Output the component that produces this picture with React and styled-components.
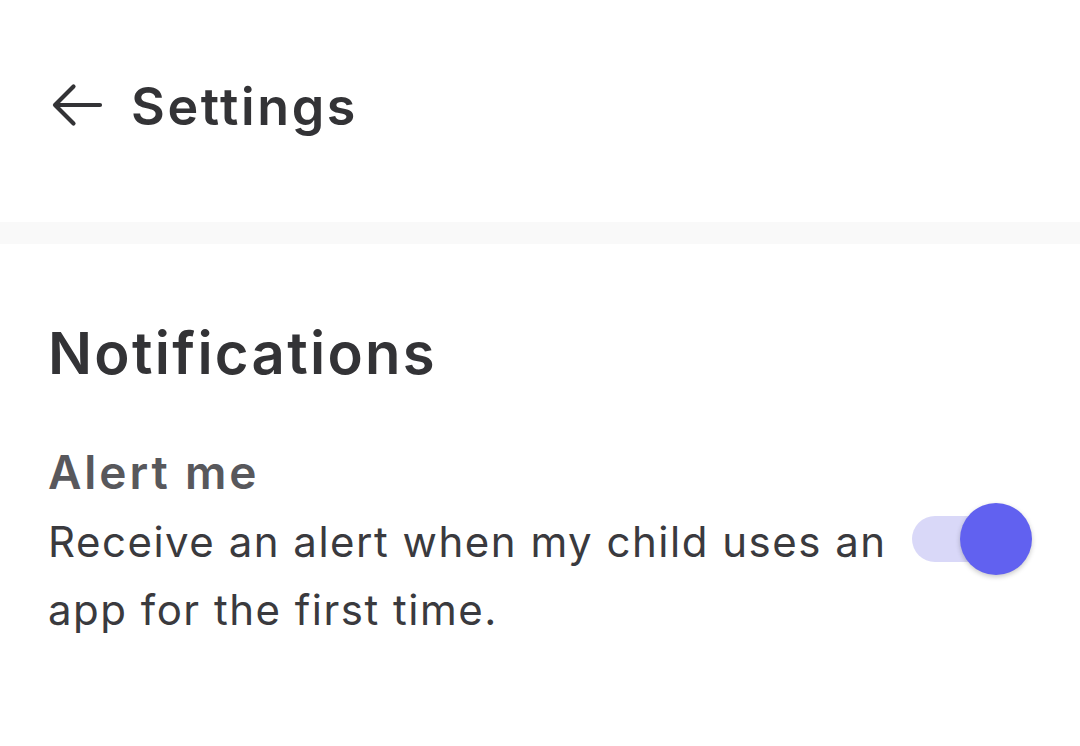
import React from "react";
import styled, { createGlobalStyle } from "styled-components";

const GlobalStyle = createGlobalStyle`
  body {
    margin: 0;
    background: #ffffff;
    font-family: "Inter", "Noto Sans", sans-serif;
  }
`;

const Page = styled.div`
  width: 1080px;
  min-height: 746px;
  background: #ffffff;
`;

const Header = styled.div`
  height: 222px;
  box-sizing: border-box;
  padding: 0 0 12px 51px;
  display: flex;
  align-items: center;
  gap: 28px;
`;

const BackButton = styled.div`
  width: 52px;
  height: 44px;
  display: flex;
  color: #333336;
`;

const HeaderTitle = styled.h1`
  margin: 4px 0 0;
  font-size: 52px;
  line-height: 52px;
  font-weight: 600;
  letter-spacing: 2.6px;
  color: #333336;
`;

const Divider = styled.div`
  height: 22px;
  background: #f9f9f9;
`;

const Section = styled.section`
  padding: 80px 48px 0;
`;

const SectionTitle = styled.h2`
  margin: 0 0 67px;
  font-size: 58px;
  line-height: 58px;
  font-weight: 600;
  letter-spacing: 2.3px;
  color: #333336;
`;

const ItemTitle = styled.div`
  font-size: 46px;
  line-height: 46px;
  font-weight: 600;
  letter-spacing: 2.9px;
  color: #58585c;
  margin-bottom: 13px;
`;

const ItemRow = styled.div`
  display: flex;
  align-items: flex-start;
`;

const Description = styled.p`
  flex: 1;
  margin: 0;
  font-size: 42px;
  line-height: 68px;
  font-weight: 400;
  letter-spacing: 1.5px;
  color: #3a3a3e;
`;

/* the thumb overhangs the track's right end, hence the right margin */
const Switch = styled.div`
  position: relative;
  flex: none;
  width: 98px;
  height: 72px;
  margin: -5px 22px 0 0;
`;

const Track = styled.div`
  position: absolute;
  left: 0;
  top: 13px;
  width: 98px;
  height: 46px;
  border-radius: 23px;
  background: ${(p) => (p.$on ? "#d9d8f8" : "#d4d4d8")};
`;

const Thumb = styled.div`
  position: absolute;
  top: 0;
  ${(p) => (p.$on ? "right: -22px;" : "left: -22px;")}
  width: 72px;
  height: 72px;
  border-radius: 50%;
  background: ${(p) => (p.$on ? "#6161f0" : "#f4f4f4")};
  box-shadow: 0 2px 5px rgba(0, 0, 0, 0.22);
`;

function Toggle({ on }) {
  return (
    <Switch>
      <Track $on={on} />
      <Thumb $on={on} />
    </Switch>
  );
}

export default function App() {
  return (
    <Page>
      <GlobalStyle />
      <Header>
        <BackButton>
          <svg width="52" height="44" viewBox="0 0 52 44" fill="none">
            <path
              d="M4 22H49M4 22L22.5 3.5M4 22L22.5 40.5"
              stroke="currentColor"
              strokeWidth="4.2"
              strokeLinecap="round"
              strokeLinejoin="round"
            />
          </svg>
        </BackButton>
        <HeaderTitle>Settings</HeaderTitle>
      </Header>
      <Divider />
      <Section>
        <SectionTitle>Notifications</SectionTitle>
        <ItemTitle>Alert me</ItemTitle>
        <ItemRow>
          <Description>
            Receive an alert when my child uses an app for the first time.
          </Description>
          <Toggle on />
        </ItemRow>
      </Section>
    </Page>
  );
}
